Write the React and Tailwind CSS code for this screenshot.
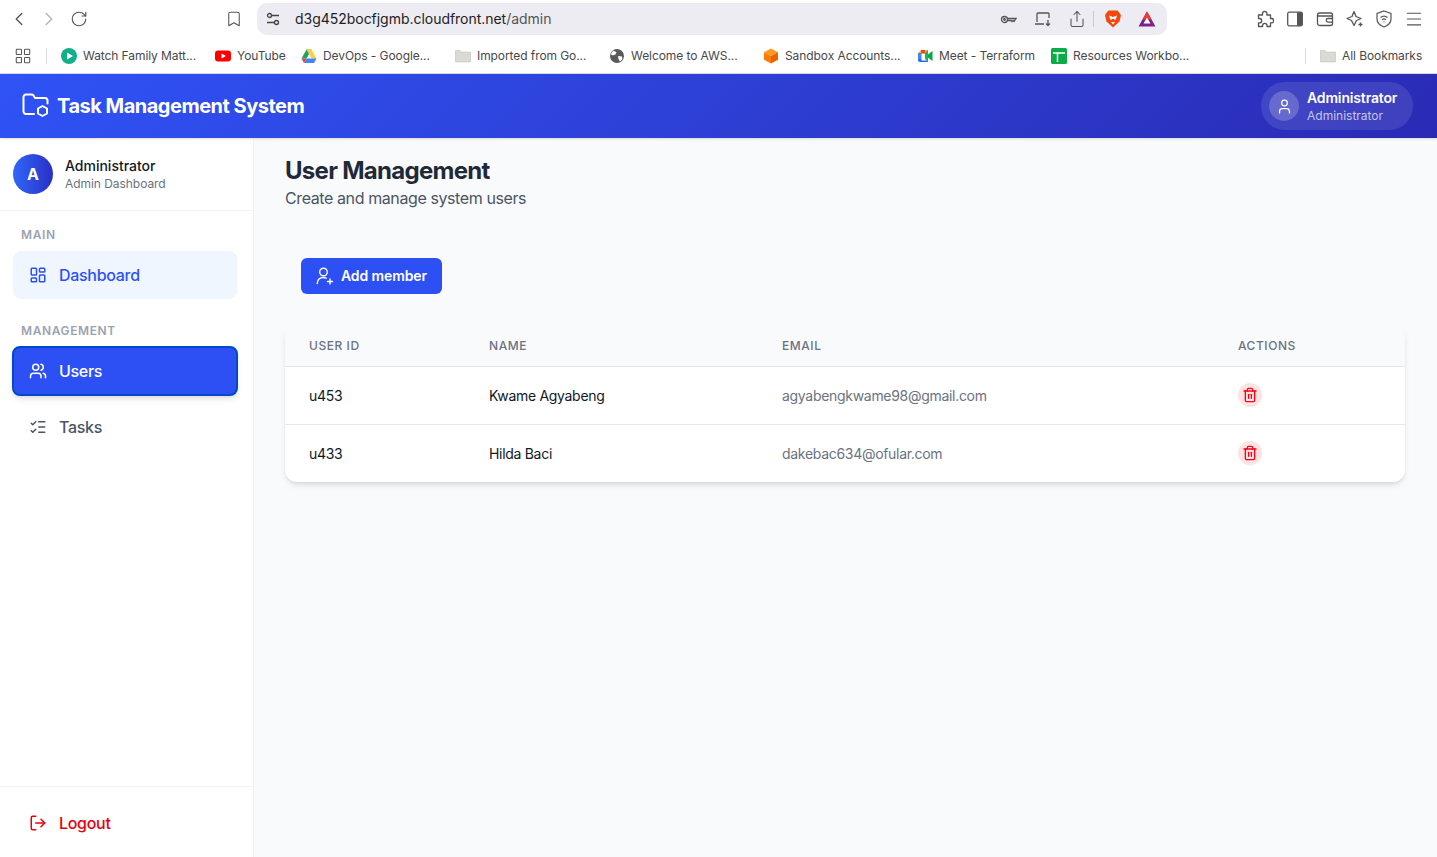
import React from "react";
import {
  ChevronLeft,
  ChevronRight,
  RotateCw,
  Bookmark,
  LayoutGrid,
  LayoutDashboard,
  Share,
  Menu,
  User,
  Users,
  ListChecks,
  LogOut,
  Trash2,
} from "lucide-react";

function PlayIcon() {
  return (
    <svg width="16" height="16" viewBox="0 0 16 16">
      <circle cx="8" cy="8" r="8" fill="#12b08a" />
      <path d="M6 4.5v7l6-3.5z" fill="#fff" />
    </svg>
  );
}

function YoutubeIcon() {
  return (
    <svg width="16" height="16" viewBox="0 0 16 16">
      <rect y="2.5" width="16" height="11" rx="3" fill="#f00" />
      <path d="M6.5 5.5v5L11 8z" fill="#fff" />
    </svg>
  );
}

function DriveIcon() {
  return (
    <svg width="16" height="16" viewBox="0 0 16 16">
      <path d="M5.5 1.5h5L8 6 5.5 10.5H.5z" fill="#1fa463" />
      <path d="M5.5 1.5h5l5 9h-5z" fill="#ffcf47" />
      <path d="M3 15h10l2.500-4.500H5.500z" fill="#4285f4" />
      <path d="M.5 10.500 3 15l2.500-4.500z" fill="#ea4335" />
    </svg>
  );
}

function FolderIcon() {
  return (
    <svg width="16" height="16" viewBox="0 0 16 16">
      <path d="M0 3.500a1 1 0 0 1 1-1h4l1.500 1.500H15a1 1 0 0 1 1 1v8a1 1 0 0 1-1 1H1a1 1 0 0 1-1-1z" fill="#d9d9d6" stroke="#bdbdb9" strokeWidth=".5" />
    </svg>
  );
}

function GlobeIcon() {
  return (
    <svg width="16" height="16" viewBox="0 0 16 16">
      <circle cx="8" cy="8" r="7" fill="#5a5a5e" />
      <path d="M4 2.800 7.500 4 6.500 6.500 3.500 7.500 1.800 6zM9 8l4 .500.500 2.500-2.500 2.500L9.500 11z" fill="#fff" />
    </svg>
  );
}

function CubeIcon() {
  return (
    <svg width="16" height="16" viewBox="0 0 16 16">
      <path d="M8 .500 15 4.200 8 8 1 4.200z" fill="#ff9a1f" />
      <path d="M1 4.200 8 8v7.500l-7-3.800z" fill="#ff7a00" />
      <path d="M15 4.200 8 8v7.500l7-3.800z" fill="#e96300" />
    </svg>
  );
}

function MeetIcon() {
  return (
    <svg width="16" height="16" viewBox="0 0 16 16">
      <path d="M1 5 4 2h7v3.500H4.500V5z" fill="#fbbc04" />
      <path d="M1 5h3.500v6H1z" fill="#4285f4" />
      <path d="M1 11h3.500v1.500H11V14H3a2 2 0 0 1-2-2z" fill="#1a73e8" />
      <path d="M11 2v12l-3-3V5z" fill="#34a853" />
      <path d="M11 6.500 15.500 3v10L11 9.500z" fill="#00ac47" />
      <path d="M4 2h4v3.500H4z" fill="#ea4335" />
    </svg>
  );
}

function SheetIcon() {
  return (
    <svg width="16" height="16" viewBox="0 0 16 16">
      <rect width="16" height="16" rx="1.500" fill="#0bac47" />
      <path d="M2 5h12M6.500 5v9" stroke="#fff" strokeWidth="1.500" />
    </svg>
  );
}

function KeyIcon() {
  return (
    <svg width="17" height="17" viewBox="0 0 17 17" fill="none" stroke="#555" strokeWidth="1.300">
      <circle cx="4.500" cy="8.500" r="3" />
      <circle cx="4.500" cy="8.500" r=".8" />
      <path d="M7.500 7.500h8.500L14 10.500l-1-1-1 1-1-1H7.500" />
    </svg>
  );
}

function CastIcon() {
  return (
    <svg width="18" height="18" viewBox="0 0 18 18" fill="none" stroke="#555" strokeWidth="1.300">
      <path d="M3 12V4a1 1 0 0 1 1-1h10a1 1 0 0 1 1 1v4M1 14h9M14 10v5M12 13.500l2 2 2-2" />
    </svg>
  );
}

function PuzzleIcon() {
  return (
    <svg width="18" height="18" viewBox="0 0 18 18" fill="none" stroke="#555" strokeWidth="1.300" strokeLinejoin="round">
      <path d="M6.500 3.500a2.200 2.200 0 0 1 4.400 0V5h3.600v3.500h1a2.200 2.200 0 0 1 0 4.400h-1v3.600H11v-1a2.200 2.200 0 0 0-4.400 0v1H2.500v-3.600h1a2.200 2.200 0 0 0 0-4.400h-1V5h4z" />
    </svg>
  );
}

function SidePanelIcon() {
  return (
    <svg width="16" height="16" viewBox="0 0 16 16">
      <rect x=".7" y="1.200" width="14.600" height="13.600" rx="1.500" fill="none" stroke="#555" strokeWidth="1.300" />
      <path d="M10 1.200h5.300v13.600H10z" fill="#555" />
    </svg>
  );
}

function WalletIcon() {
  return (
    <svg width="18" height="18" viewBox="0 0 18 18" fill="none" stroke="#555" strokeWidth="1.300">
      <rect x="1.500" y="3" width="15" height="12.500" rx="2" />
      <path d="M1.500 6h15M16.500 8.500H12a1.800 1.800 0 0 0 0 3.600h4.500" />
    </svg>
  );
}

function StarIcon() {
  return (
    <svg width="18" height="18" viewBox="0 0 18 18" fill="none" stroke="#555" strokeWidth="1.300">
      <path d="M8 1.500 10 6.500l5 2-4.500 2-2.500 5-2.500-5-4.500-2 5-2z" strokeLinejoin="round" />
      <path d="M14.500 12.500v4M12.500 14.500h4" />
    </svg>
  );
}

function BraveIcon() {
  return (
    <svg width="16" height="18" viewBox="0 0 16 18">
      <path d="M3.500.500h9L15 3.500 16 5.500 14.500 11.500 8 17.500 1.500 11.500 0 5.500 1 3.500z" fill="#f1490f" />
      <path d="M4 5.500 8 7l4-1.500L10.500 10 8 8.500 5.500 10zM6 12h4l-2 2.500z" fill="#fff" />
    </svg>
  );
}

function BatIcon() {
  return (
    <svg width="18" height="16" viewBox="0 0 18 16">
      <path d="M9 .500 17.500 15.500H.5z" fill="#7d1f8c" />
      <path d="M9 .500 13.500 8.500h-9z" fill="#f03a2e" />
      <path d="M9 6.500 12.500 12.500h-7z" fill="#fff" />
    </svg>
  );
}

function ShieldIcon() {
  return (
    <svg width="16" height="18" viewBox="0 0 16 18" fill="none" stroke="#555" strokeWidth="1.200">
      <path d="M8 1 15 3.500V9c0 4-3 6.500-7 8-4-1.500-7-4-7-8V3.500z" />
      <path d="M4.500 7.500c2-1.700 5-1.700 7 0M6 9.700c1.200-1 2.800-1 4 0M7.500 11.800h1" />
    </svg>
  );
}

// folder outline left open at the corner where the small hexagon sits
function FolderHexIcon() {
  return (
    <svg width="28" height="26" viewBox="0 0 28 26" fill="none" stroke="#fff" strokeWidth="2" strokeLinecap="round" strokeLinejoin="round">
      <path d="M12 21H4a2.500 2.500 0 0 1-2.500-2.500V4A2.500 2.500 0 0 1 4 1.500h5.500c.8 0 1.500.4 2 1l1.500 2.500h10a2.500 2.500 0 0 1 2.500 2.500v3" />
      <path d="M20.500 13 25 15.500v5L20.500 23 16 20.500v-5z" />
    </svg>
  );
}

// person with a small plus low on the right
function AddMemberIcon() {
  return (
    <svg width="18" height="18" viewBox="0 0 18 18" fill="none" stroke="#fff" strokeWidth="1.400" strokeLinecap="round">
      <circle cx="7.500" cy="5" r="3.800" />
      <path d="M1.200 16.500c.3-3.800 2.800-6 6.300-6 1 0 2 .2 2.800.6" />
      <path d="M14 12v5M11.500 14.500h5" />
    </svg>
  );
}

const bookmarks = [
  { label: "Watch Family Matt...", icon: <PlayIcon />, cls: "w-[154px]" },
  { label: "YouTube", icon: <YoutubeIcon />, cls: "w-[86px]" },
  { label: "DevOps - Google...", icon: <DriveIcon />, cls: "w-[154px]" },
  { label: "Imported from Go...", icon: <FolderIcon />, cls: "w-[154px]" },
  { label: "Welcome to AWS...", icon: <GlobeIcon />, cls: "w-[154px]" },
  { label: "Sandbox Accounts...", icon: <CubeIcon />, cls: "w-[154px]" },
  { label: "Meet - Terraform", icon: <MeetIcon />, cls: "w-[134px]" },
  { label: "Resources Workbo...", icon: <SheetIcon />, cls: "w-[150px]" },
];

const members = [
  { id: "u453", name: "Kwame Agyabeng", email: "agyabengkwame98@gmail.com" },
  { id: "u433", name: "Hilda Baci", email: "dakebac634@ofular.com" },
];

function BrowserBar() {
  return (
    <div className="shrink-0 bg-white border-b border-[#dcdce0] text-[#48484c]">
      <div className="h-[38px] flex items-center">
        <ChevronLeft size={22} strokeWidth={1.5} className="ml-[8px] text-[#555]" />
        <ChevronRight size={22} strokeWidth={1.5} className="ml-[8px] text-[#b5b5b5]" />
        <RotateCw size={18} strokeWidth={1.5} className="ml-[10px] text-[#555]" />
        <Bookmark size={18} strokeWidth={1.4} className="ml-[137px] text-[#555]" />
        <div className="ml-[14px] w-[910px] h-[32px] rounded-[10px] bg-[#edecf2] flex items-center">
          <svg width="14" height="14" viewBox="0 0 14 14" fill="none" stroke="#444" strokeWidth="1.300" className="ml-[9px]">
            <circle cx="3.500" cy="3.500" r="2" />
            <circle cx="10.500" cy="10.500" r="2" />
            <path d="M6 3.500h7M1 10.500h7" />
          </svg>
          <span className="ml-[15px] -mt-[1px] text-[14px] tracking-[-0.03px] text-[#222]">
            d3g452bocfjgmb.cloudfront.net<span className="text-[#555]">/admin</span>
          </span>
          <div className="ml-auto flex items-center">
            <KeyIcon />
            <span className="ml-[17px]"><CastIcon /></span>
            <Share size={18} strokeWidth={1.4} className="ml-[16px] text-[#555]" />
            <div className="ml-[7px] w-px h-[16px] bg-[#c9c9ce]" />
            <span className="ml-[11px] flex"><BraveIcon /></span>
            <span className="ml-[17px] mr-[11px] flex"><BatIcon /></span>
          </div>
        </div>
        <span className="ml-[89px] flex"><PuzzleIcon /></span>
        <span className="ml-[13px] flex"><SidePanelIcon /></span>
        <span className="ml-[13px] flex"><WalletIcon /></span>
        <span className="ml-[12px] flex"><StarIcon /></span>
        <span className="ml-[12px] flex"><ShieldIcon /></span>
        <Menu size={20} strokeWidth={1.3} className="ml-[12px] text-[#555]" />
      </div>
      <div className="h-[35px] flex items-center text-[12px] tracking-[-0.08px]">
        <LayoutGrid size={18} strokeWidth={1.4} className="ml-[14px] text-[#555]" />
        <div className="ml-[14px] mr-[14px] w-px h-[16px] bg-[#dcdce0]" />
        {bookmarks.map((b) => (
          <div key={b.label} className={`${b.cls} flex items-center gap-[6px] shrink-0`}>
            <span className="flex shrink-0">{b.icon}</span>
            <span className="whitespace-nowrap">{b.label}</span>
          </div>
        ))}
        <div className="ml-[104px] w-px h-[16px] bg-[#dcdce0]" />
        <div className="ml-[14px] flex items-center gap-[6px]">
          <FolderIcon />
          <span className="whitespace-nowrap">All Bookmarks</span>
        </div>
      </div>
    </div>
  );
}

function AppHeader() {
  return (
    <header className="relative z-10 shrink-0 h-[64px] px-[24px] flex items-center justify-between text-white bg-linear-135 from-[#2f53f6] to-[#2a2bb5] shadow-sm">
      <div className="flex items-center gap-[7px] -ml-[2px]">
        <FolderHexIcon />
        <span className="text-[20px] font-bold tracking-[-0.5px]">Task Management System</span>
      </div>
      <div className="h-[48px] w-[152px] rounded-full bg-white/10 flex items-center px-[8px] gap-[8px]">
        <div className="w-[30px] h-[30px] rounded-full bg-white/20 flex items-center justify-center">
          <User size={17} strokeWidth={1.8} />
        </div>
        <div>
          <p className="text-[14px] leading-[18px] font-semibold tracking-[-0.15px]">Administrator</p>
          <p className="mt-[1px] text-[12px] leading-[16px] text-white/70">Administrator</p>
        </div>
      </div>
    </header>
  );
}

function NavItem({ icon, label, kind }) {
  const styles = {
    soft: "h-[48px] ml-[13px] mr-[16px] bg-[#eff6ff] text-[#2d50f5] pl-[16px]",
    active: "h-[50px] ml-[12px] mr-[15px] bg-[#2d50f5] text-white border-2 border-[#0049c8] shadow-md pl-[15px]",
    plain: "h-[48px] ml-[13px] mr-[16px] text-[#4b5563] pl-[16px]",
    danger: "h-[48px] ml-[13px] mr-[16px] text-[#e7000b] pl-[16px]",
  };
  return (
    <div className={`${styles[kind]} rounded-[8px] flex items-center gap-[12px] text-[16px] font-medium tracking-[-0.3px]`}>
      {icon}
      <span>{label}</span>
    </div>
  );
}

function Sidebar() {
  return (
    <aside className="shrink-0 w-[254px] bg-white border-r border-[#f0f1f4] flex flex-col">
      <div className="h-[73px] border-b border-[#f1f2f5] pl-[13px] flex items-center gap-[12px]">
        <div className="w-[40px] h-[40px] rounded-full bg-linear-to-r from-[#3066fb] to-[#2a2ec4] flex items-center justify-center text-white font-bold text-[16px]">
          A
        </div>
        <div>
          <p className="text-[14px] leading-[18px] font-medium text-[#111827]">Administrator</p>
          <p className="mt-[1px] text-[12px] leading-[16px] tracking-[-0.05px] text-[#6b7280]">Admin Dashboard</p>
        </div>
      </div>
      <p className="mt-[16px] ml-[21px] h-[16px] leading-[16px] text-[12px] font-semibold tracking-[0.6px] text-[#9ca3af]">MAIN</p>
      <div className="mt-[8px]">
        <NavItem kind="soft" label="Dashboard" icon={<LayoutDashboard size={18} strokeWidth={2} />} />
      </div>
      <p className="mt-[24px] ml-[21px] h-[16px] leading-[16px] text-[12px] font-semibold tracking-[0.6px] text-[#9ca3af]">MANAGEMENT</p>
      <div className="mt-[7px] flex flex-col gap-[7px]">
        <NavItem kind="active" label="Users" icon={<Users size={18} strokeWidth={2} />} />
        <NavItem kind="plain" label="Tasks" icon={<ListChecks size={18} strokeWidth={2} />} />
      </div>
      <div className="mt-auto h-[71px] border-t border-[#f1f2f5] pt-[2px] flex items-center">
        <div className="w-full">
          <NavItem kind="danger" label="Logout" icon={<LogOut size={18} strokeWidth={2} />} />
        </div>
      </div>
    </aside>
  );
}

function MemberTable() {
  return (
    <div className="mt-[31px] bg-white rounded-[12px] shadow-md overflow-hidden">
      <table className="w-full table-fixed text-left">
        <thead className="bg-[#f9fafb] border-b border-[#e5e7eb]">
          <tr className="h-[41px] text-[12px] tracking-[0.55px] text-[#6b7280]">
            <th className="w-[180px] pl-[24px] pt-[2px] font-medium">USER ID</th>
            <th className="w-[293px] pl-[24px] pt-[2px] font-medium">NAME</th>
            <th className="w-[456px] pl-[24px] pt-[2px] font-medium">EMAIL</th>
            <th className="pl-[24px] pt-[2px] font-medium">ACTIONS</th>
          </tr>
        </thead>
        <tbody className="text-[14px] tracking-[-0.3px]">
          {members.map((m, i) => (
            <tr key={m.id} className={i > 0 ? "h-[58px] border-t border-[#e5e7eb]" : "h-[58px]"}>
              <td className="pl-[24px] text-[#111827]">{m.id}</td>
              <td className="pl-[24px] text-[#111827]">{m.name}</td>
              <td className="pl-[24px] text-[#6b7280]">{m.email}</td>
              <td className="pl-[24px]">
                <button className="w-[24px] h-[24px] rounded-full bg-[#ffe2e2] text-[#fb0019] flex items-center justify-center">
                  <Trash2 size={16} strokeWidth={2} />
                </button>
              </td>
            </tr>
          ))}
        </tbody>
      </table>
    </div>
  );
}

export default function App() {
  return (
    <div className="h-screen flex flex-col overflow-hidden font-['Inter',sans-serif]">
      <BrowserBar />
      <AppHeader />
      <div className="flex-1 flex min-h-0">
        <Sidebar />
        <main className="flex-1 bg-[#f9fafc] pl-[31px] pr-[32px] pt-[17px]">
          <h1 className="text-[24px] leading-[32px] font-bold tracking-[-0.72px] text-[#1f2937]">User Management</h1>
          <p className="-mt-[1px] text-[16px] leading-[24px] tracking-[-0.4px] text-[#4b5563]">Create and manage system users</p>
          <button className="mt-[48px] ml-[16px] w-[141px] h-[36px] rounded-[6px] bg-[#2d50f5] text-white text-[14px] font-semibold tracking-[-0.1px] flex items-center justify-center gap-[7px]">
            <AddMemberIcon />
            <span className="-mt-[2px]">Add member</span>
          </button>
          <MemberTable />
        </main>
      </div>
    </div>
  );
}
